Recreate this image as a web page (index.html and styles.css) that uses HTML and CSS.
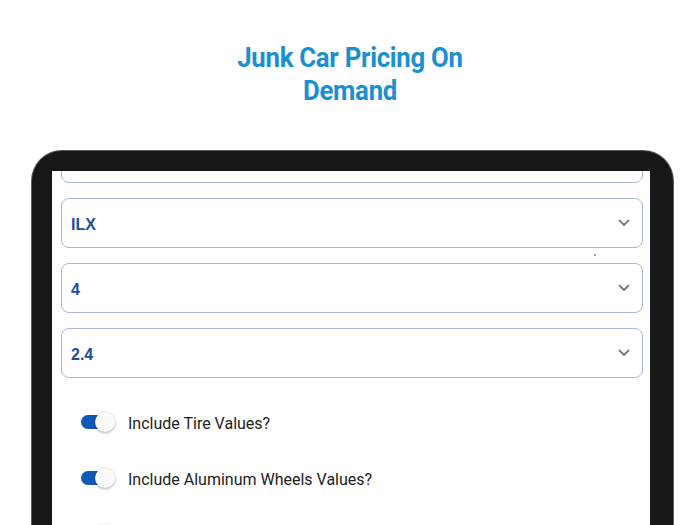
FILE: index.html
```html
<!DOCTYPE html>
<html>
<head>
<meta charset="utf-8">
<link rel="stylesheet" href="styles.css">
</head>
<body>
<div class="page">
  <h1 class="title">Junk Car Pricing On<br>Demand</h1>
  <div class="device">
    <div class="screen">
      <div class="content">
        <div class="select"><span class="value"></span><svg class="chev" viewBox="0 0 12 8"><path d="M1.5 1.5 L6 6 L10.5 1.5" fill="none" stroke="#7a7a7a" stroke-width="1.8" stroke-linecap="round" stroke-linejoin="round"/></svg></div>
        <div class="select"><span class="value">ILX</span><svg class="chev" viewBox="0 0 12 8"><path d="M1.5 1.5 L6 6 L10.5 1.5" fill="none" stroke="#7a7a7a" stroke-width="1.8" stroke-linecap="round" stroke-linejoin="round"/></svg></div>
        <div class="select"><span class="value">4</span><svg class="chev" viewBox="0 0 12 8"><path d="M1.5 1.5 L6 6 L10.5 1.5" fill="none" stroke="#7a7a7a" stroke-width="1.8" stroke-linecap="round" stroke-linejoin="round"/></svg></div>
        <div class="select"><span class="value">2.4</span><svg class="chev" viewBox="0 0 12 8"><path d="M1.5 1.5 L6 6 L10.5 1.5" fill="none" stroke="#7a7a7a" stroke-width="1.8" stroke-linecap="round" stroke-linejoin="round"/></svg></div>
        <div class="toggles">
          <div class="row"><span class="switch"><span class="track"></span><span class="thumb"></span></span><span class="label">Include Tire Values?</span></div>
          <div class="row"><span class="switch"><span class="track"></span><span class="thumb"></span></span><span class="label">Include Aluminum Wheels Values?</span></div>
          <div class="row"><span class="switch off"><span class="track"></span><span class="thumb"></span></span></div>
        </div>
      </div>
      <span class="dot"></span>
    </div>
  </div>
</div>
</body>
</html>
```
FILE: styles.css
```css
html, body {
  margin: 0;
  padding: 0;
  background: #ffffff;
}
.page {
  width: 700px;
  height: 525px;
  overflow: hidden;
  position: relative;
  font-family: Roboto, "Liberation Sans", sans-serif;
}
.title {
  margin: 0;
  padding-top: 41px;
  text-align: center;
  font-family: Roboto, "Liberation Sans", sans-serif;
  font-weight: 700;
  font-size: 28px;
  line-height: 33px;
  color: #1b8fcf;
  letter-spacing: -0.3px;
  transform: scaleX(0.92);
  transform-origin: 350px 0;
}
.device {
  margin-top: 44px;
  margin-left: 32px;
  width: 598px;
  height: 400px;
  padding: 20px 23px 0 20px;
  background: #151719;
  border-radius: 30px 30px 0 0;
  box-shadow: 0 0 0 1px #5b5f64;
}
.screen {
  height: 100%;
  overflow: hidden;
  position: relative;
  background: #fff;
}
.content {
  margin-top: -38px;
  padding: 0 7px 0 9px;
  display: flex;
  flex-direction: column;
  gap: 15px;
}
.select {
  height: 48px;
  border: 1px solid #a3b8da;
  border-radius: 8px;
  display: flex;
  align-items: center;
  justify-content: space-between;
  padding: 0 12px 0 9px;
}
.value {
  font-family: "Liberation Sans", Arial, sans-serif;
  font-weight: 700;
  font-size: 16px;
  color: #1d4f9e;
  padding-top: 4px;
}
.chev {
  width: 12px;
  height: 8px;
}
.toggles {
  display: flex;
  flex-direction: column;
  gap: 32px;
  padding-top: 17px;
  padding-left: 20px;
}
.row {
  display: flex;
  align-items: center;
  height: 24px;
}
.switch {
  position: relative;
  width: 36px;
  height: 24px;
  flex: none;
}
.track {
  position: absolute;
  left: 0;
  top: 5px;
  width: 30px;
  height: 14px;
  border-radius: 7px;
  background: #0f5ab7;
}
.thumb {
  position: absolute;
  left: 14px;
  top: 2px;
  width: 20px;
  height: 20px;
  border-radius: 50%;
  background: #fbfbfb;
  box-shadow: 0 1px 3px rgba(0,0,0,0.35);
}
.switch.off .track { background: #bdbdbd; }
.switch.off .thumb { left: 14px; }
.label {
  margin-left: 11px;
  font-size: 16px;
  color: #222222;
  padding-top: 2px;
}
.dot {
  position: absolute;
  left: 542px;
  top: 83px;
  width: 2px;
  height: 2px;
  border-radius: 1px;
  background: #8a8a8a;
}
```
